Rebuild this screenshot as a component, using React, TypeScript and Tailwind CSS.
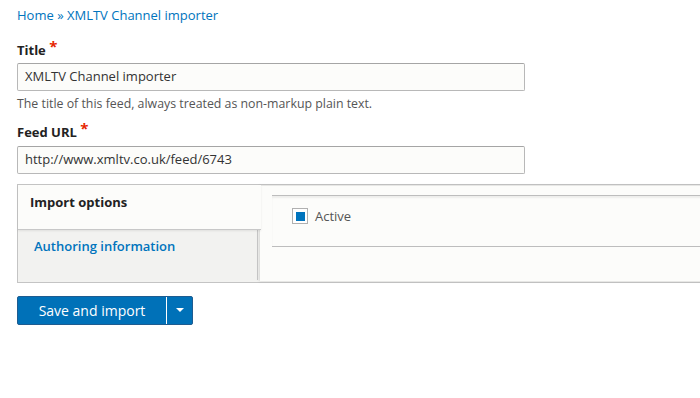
import React from "react";

export default function App() {
  return (
    <div
      className="w-[700px] h-[398px] bg-white overflow-hidden text-[#333]"
      style={{ fontFamily: '"Open Sans", "Noto Sans", sans-serif' }}
    >
      <div className="pl-[17px] pt-[6px]">
        <div className="text-[13px] leading-[18px] text-[#0074bd]">
          <span>Home</span>
          <span className="text-[#0074bd]"> » </span>
          <span>XMLTV Channel importer</span>
        </div>

        <div className="mt-[16px]">
          <div className="text-[13px] font-bold leading-[18px] text-[#222]">
            Title <span className="text-[#e62600] text-[15px] relative top-[-3px]">*</span>
          </div>
          <div className="mt-[4px] w-[508px] h-[28px] border border-[#b8b8b8] border-t-[#a5a5a5] bg-[#fcfcfa] rounded-[2px] px-[7px] flex items-center text-[13px] text-[#333]">
            XMLTV Channel importer
          </div>
          <div className="mt-[4px] text-[12.35px] leading-[18px] text-[#555]">
            The title of this feed, always treated as non-markup plain text.
          </div>
        </div>

        <div className="mt-[9px]">
          <div className="text-[13px] font-bold leading-[18px] text-[#222]">
            Feed URL <span className="text-[#e62600] text-[15px] relative top-[-3px]">*</span>
          </div>
          <div className="mt-[5px] w-[508px] h-[28px] border border-[#b8b8b8] border-t-[#a5a5a5] bg-[#fcfcfa] rounded-[2px] px-[7px] flex items-center text-[13px] text-[#333]">
            http://www.xmltv.co.uk/feed/6743
          </div>
        </div>

        <div className="mt-[10px] w-[700px] h-[99px] border border-[#c4c4c4] border-r-0 bg-[#f2f2f0] flex">
          <div className="w-[240px] flex flex-col border-r border-[#c8c8c8] mb-[2px]">
            <div className="h-[45px] w-[243px] bg-[#fcfcfa] border-b border-[#c8c8c8] px-[12px] pt-[8px] text-[13px] font-bold text-[#222] relative z-10 shadow-[0_1px_2px_rgba(0,0,0,0.08)]">
              Import options
            </div>
            <div className="px-[16px] pt-[7px] text-[13px] font-semibold text-[#0074bd]">
              Authoring information
            </div>
          </div>
          <div className="flex-1 mt-[1px] mb-[1px] ml-[2px] bg-[#fcfcfa] shadow-[-1px_0_3px_rgba(0,0,0,0.12)] pl-[12px] pt-[9px]">
            <div className="border-t border-b border-[#bdbdbd] shadow-[inset_0_2px_2px_rgba(0,0,0,0.06)] h-[52px] flex items-start pt-[12px] pl-[20px]">
              <div className="w-[16px] h-[16px] border border-[#b0b0b0] bg-white flex items-center justify-center">
                <div className="w-[9px] h-[9px] bg-[#0074bd]" />
              </div>
              <span className="ml-[7px] text-[13px] leading-[16px] text-[#555]">Active</span>
            </div>
          </div>
        </div>

        <div className="mt-[13px] flex w-[176px] h-[29px] bg-[#0071b8] border border-[#1e5c90] rounded-[2px] text-white">
          <div className="w-[149px] flex items-center justify-center text-[14px] border-r border-white">
            Save and import
          </div>
          <div className="flex-1 flex items-center justify-center">
            <svg width="8" height="5" viewBox="0 0 8 5">
              <path d="M0 0 L8 0 L4 4 Z" fill="white" />
            </svg>
          </div>
        </div>
      </div>
    </div>
  );
}
